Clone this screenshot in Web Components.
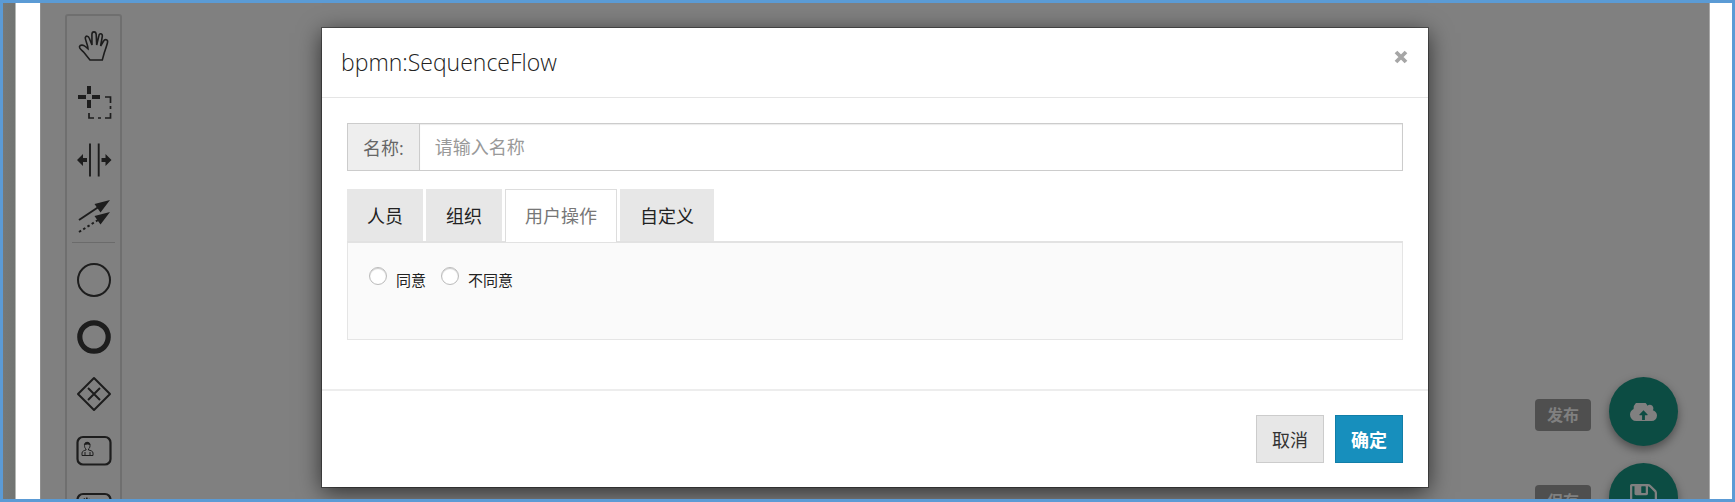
<!DOCTYPE html>
<html lang="zh-CN">
<head>
<meta charset="utf-8">
<meta name="viewport" content="width=device-width, initial-scale=1">
<title>bpmn:SequenceFlow</title>
<style>
  html, body { margin: 0; height: 100%; }
  body { font-family: "Open Sans", "Noto Sans CJK SC", sans-serif; color: #222; overflow: hidden; }
</style>
</head>
<body>
<flow-designer>
  <tool-palette slot="palette">
    <palette-tool name="hand" label="Hand tool"></palette-tool>
    <palette-tool name="lasso" label="Lasso tool"></palette-tool>
    <palette-tool name="space" label="Space tool"></palette-tool>
    <palette-tool name="connect" label="Connect tool"></palette-tool>
    <palette-divider></palette-divider>
    <palette-tool name="start" label="Start event"></palette-tool>
    <palette-tool name="end" label="End event"></palette-tool>
    <palette-tool name="gateway" label="Gateway"></palette-tool>
    <palette-tool name="user" label="User task"></palette-tool>
    <palette-tool name="service" label="Service task"></palette-tool>
  </tool-palette>
  <modal-dialog slot="dialog" heading="bpmn:SequenceFlow">
    <name-field label="名称:" placeholder="请输入名称"></name-field>
    <tab-panel tabs="人员,组织,用户操作,自定义" active="2">
      <radio-option label="同意"></radio-option>
      <radio-option label="不同意"></radio-option>
    </tab-panel>
    <action-button slot="footer">取消</action-button>
    <action-button slot="footer" primary>确定</action-button>
  </modal-dialog>
  <floating-action slot="actions" label="发布" icon="cloud"></floating-action>
  <floating-action slot="actions" label="保存" icon="save"></floating-action>
</flow-designer>

<script>
const define = (name, render) => customElements.define(name, class extends HTMLElement {
  connectedCallback() {
    if (this.shadowRoot) return;
    this.attachShadow({ mode: 'open' }).innerHTML = '<style>*{box-sizing:border-box}</style>' + render(this);
  }
});

define('flow-designer', () => `
  <style>
    :host { display: flex; box-sizing: border-box; height: 100vh; border: 3px solid #5b9bd5; background: #fff; overflow: hidden; }
    .edge { flex: 0 0 13px; background: linear-gradient(90deg, #767977, #717472); border-right: 1px solid #b5b8b5; }
    .canvas { flex: 1; min-width: 0; display: grid; margin: 0 22px 0 24px; background: #808080;
      border-left: 1px solid #8f8f8f; border-right: 1px solid #a8a8a8; overflow: hidden; }
    .canvas > * { grid-area: 1 / 1; align-self: start; }
    .palette { justify-self: start; padding: 11px 0 0 24px; }
    .actions { justify-self: end; display: grid; gap: 17px; padding: 374px 31px 0 0; }
    .dialog { justify-self: center; width: 100%; max-width: 1106px; padding-top: 25px; z-index: 1; }
  </style>
  <div class="edge"></div>
  <main class="canvas">
    <div class="palette"><slot name="palette"></slot></div>
    <div class="actions"><slot name="actions"></slot></div>
    <div class="dialog"><slot name="dialog"></slot></div>
  </main>`);

define('tool-palette', () => `
  <style>
    :host { display: flex; flex-direction: column; box-sizing: border-box; width: 57px; border: 2px solid #6f6f6f; border-radius: 3px; }
  </style><slot></slot>`);

define('palette-divider', () => `
  <style>:host { display: block; height: 1px; margin: 1px 5px 5px; background: #6b6b6b; }</style>`);

const task = '<rect x="3.500" y="6" width="33" height="27.500" rx="5.500" stroke-width="2.200"/>';
const tools = {
  hand: '<path stroke-width="1.600" d="M16 34 L10 26.500 C8 24.500 5 22.500 5.500 20.500 C6.300 18.300 9.500 19 11.300 20.500 L14 22.800 C14 18.500 10.800 13.500 11.300 11.500 C12 9.500 14.400 9.800 15.200 12 L18 19 L17.900 8.500 C18 5 21.900 5 22.200 8.500 L22.700 19 L24.800 10 C25.400 6.500 28.700 7.300 28.300 10.500 L26.600 20 L29.300 15.500 C31 12.500 34.200 13.500 33.500 16.500 C33 19 31.500 23 30.500 26 L28.300 34 Z"/>',
  lasso: '<path stroke-width="4" d="M15 3v8M15 17v8M4 14h8M18 14h8"/><path stroke-width="1.700" d="M31 14h5.500v6M36.500 23v3M36.500 30v5H31M27 35h-3M20 35h-5v-5"/>',
  space: '<path stroke-width="1.900" d="M16 3.500v33M24.700 3.500v33"/><path fill="#1d1d1d" stroke="none" d="M3 20l6-6v4h4v4H9v4zM37.500 20l-6-6v4H27.500v4h4v4z"/>',
  connect: '<path stroke-width="2" d="M5 23l21-14"/><path stroke-width="2" stroke-dasharray="2.500 2.500" d="M5 35l19-12"/><path fill="#1d1d1d" stroke="none" d="M36 3L20.500 7l6 8.500zM36 15L20.500 19l6 8.500z"/>',
  start: '<circle cx="20" cy="20" r="16" stroke-width="2"/>',
  end: '<circle cx="20" cy="20" r="14.200" stroke-width="5.200"/>',
  gateway: '<path stroke-width="2" stroke-linejoin="round" d="M20 4l16 16-16 16L4 20zM14 14l12 12M26 14L14 26"/>',
  user: task + '<path stroke-width="1" d="M10.500 14.500c-1-4 6-4.500 5.500 0c0 2-.8 3-1.500 3.500v1c2 .5 4.500 1 4.500 3v2.500H8v-2.500c0-2 2.500-2.500 4-3v-1c-1-.7-1.500-1.800-1.500-3.500M11 24v-3M16 24v-3"/><path fill="#1d1d1d" stroke="none" d="M10.500 14c0-4 6-4 5.700 0c-2-.8-3.500-.8-5.700 0"/>',
  service: task + '<circle cx="12.500" cy="14" r="3.500" stroke-width="1.800" stroke-dasharray="1.600 1"/>'
};
define('palette-tool', el => `
  <style>
    :host { display: block; margin-bottom: 8px; }
    :host(:first-child) { margin-top: 5px; }
    :host([name="connect"]) { margin-bottom: 0; }
    :host([name="start"]) { margin-top: 7px; }
    button { display: grid; place-items: center; width: 100%; height: 49px; padding: 0; border: 0; background: none; }
    svg { display: block; fill: none; stroke: #1d1d1d; }
  </style>
  <button type="button" aria-label="${el.getAttribute('label')}"><svg width="40" height="40" viewBox="0 0 40 40">${tools[el.getAttribute('name')]}</svg></button>`);

define('modal-dialog', el => `
  <style>
    :host { display: block; background: #fff; outline: 1px solid rgba(0,0,0,.35); box-shadow: 0 5px 22px rgba(0,0,0,.65); }
    header { display: flex; justify-content: space-between; align-items: flex-start; height: 70px; padding: 18px 19px 0; border-bottom: 1px solid #e5e5e5; }
    h2 { margin: 0; font-size: 23px; line-height: 32px; font-weight: 300; color: #222; }
    .close { display: grid; margin-top: 4px; padding: 0; border: 0; background: none; }
    .body { padding: 25px 25px 49px; }
    footer { display: flex; justify-content: flex-end; gap: 11px; padding: 24px 25px; border-top: 2px solid #ededed; }
  </style>
  <section role="dialog" aria-labelledby="title">
    <header>
      <h2 id="title">${el.getAttribute('heading')}</h2>
      <button class="close" type="button" aria-label="关闭"><svg width="16" height="14" viewBox="0 0 16 14"><path d="M3 2l10 10M13 2L3 12" stroke="#a6a6a6" stroke-width="3.800"/></svg></button>
    </header>
    <div class="body"><slot></slot></div>
    <footer><slot name="footer"></slot></footer>
  </section>`);

define('name-field', el => `
  <style>
    :host { display: flex; height: 48px; margin-bottom: 18px; font-size: 18px; }
    label { display: flex; align-items: center; padding: 0 15px 1px; background: #eee; border: 1px solid #ccc; border-right: 0; color: #666; }
    input { flex: 1; min-width: 0; padding: 0 15px; border: 1px solid #ccc; border-radius: 0; background: #fff;
      box-shadow: inset 0 1px 1px rgba(0,0,0,.08); font: inherit; color: #444; outline: 0; }
    input::placeholder { color: #999; opacity: 1; }
  </style>
  <label for="name">${el.getAttribute('label')}</label><input id="name" type="text" placeholder="${el.getAttribute('placeholder')}">`);

define('tab-panel', el => `
  <style>
    :host { display: block; }
    .tabs { display: flex; gap: 3px; border-bottom: 2px solid #e2e2e2; }
    button { height: 52px; padding: 0 20px 1px; border: 0; background: #e7e7e7; font: inherit; font-size: 18px; color: #222; }
    button[aria-selected="true"] { margin-bottom: -1px; height: 53px; padding: 0 19px 3px; border: 1px solid #ddd; border-bottom: 0; background: #fff; color: #777; }
    .panel { display: flex; gap: 15px; height: 97px; padding: 24px 21px; border: 1px solid #e5e5e5; border-top: 0; background: #fafafa; }
  </style>
  <div class="tabs" role="tablist">${el.getAttribute('tabs').split(',').map((t, i) =>
    `<button type="button" role="tab" aria-selected="${i == el.getAttribute('active')}">${t}</button>`).join('')}</div>
  <div class="panel" role="tabpanel"><slot></slot></div>`);

define('radio-option', el => `
  <style>
    :host { display: block; }
    label { display: flex; gap: 9px; font-size: 15px; line-height: 22px; }
    span { padding-top: 2px; }
    input { appearance: none; width: 18px; height: 18px; margin: 0; border: 1px solid #bbb; border-radius: 50%; background: #fff; box-shadow: inset 0 1px 1px #ccc; }
  </style>
  <label><input type="radio" name="operation"><span>${el.getAttribute('label')}</span></label>`);

define('action-button', el => `
  <style>
    :host { display: block; }
    button { height: 48px; padding: 0 15px; border: 1px solid #ccc; background: #e7e7e7; font: inherit; font-size: 18px; color: #333; }
    .primary { border-color: #117ea8; background: #178fbd; color: #fff; font-weight: 600; }
  </style>
  <button type="button" class="${el.hasAttribute('primary') ? 'primary' : ''}"><slot></slot></button>`);

const actionIcons = {
  cloud: '<svg width="27" height="18" viewBox="0 256 1920 1280"><path d="M1250 1070L960 780 670 1070q-20 50 20 50h170v340h200v-340h170q40 0 20-50zm670 82q0 159-112.500 271.500t-271.500 112.500h-1088q-185 0-316.500-131.500t-131.500-316.500q0-130 70-240t188-165q-2-30-2-43 0-212 150-362t362-150q156 0 285.500 87t188.500 231q71-62 166-62 106 0 181 75t75 181q0 76-41 138 130 31 213.500 135.500t83.500 238.500z" fill-rule="evenodd"/></svg>',
  save: '<svg width="27" height="27" viewBox="128 128 1536 1536"><path d="M512 1536h768v-384h-768v384zm896 0h128v-896q0-14-10-38.500t-20-34.500l-281-281q-10-10-34-20t-39-10v416q0 40-28 68t-68 28h-576q-40 0-68-28t-28-68v-416h-128v1280h128v-416q0-40 28-68t68-28h832q40 0 68 28t28 68v416zm-384-928v-320q0-13-9.500-22.500t-22.500-9.500h-192q-13 0-22.500 9.500t-9.500 22.500v320q0 13 9.500 22.500t22.500 9.500h192q13 0 22.500-9.500t9.500-22.500zm640 32v928q0 40-28 68t-68 28h-1344q-40 0-68-28t-28-68v-1344q0-40 28-68t68-28h928q40 0 88 20t76 48l280 280q28 28 48 76t20 88z"/></svg>'
};
define('floating-action', el => `
  <style>
    :host { display: flex; align-items: center; gap: 18px; }
    label { margin-top: 7px; padding: 0 12px; border-radius: 4px; background: #4f4f4f; color: #808080; font-size: 16px; line-height: 32px; font-weight: 700; }
    button { display: grid; place-items: center; width: 69px; height: 69px; padding: 0; border: 0; border-radius: 50%; background: #0c4c43; box-shadow: 0 4px 10px rgba(0,0,0,.4); }
    svg { display: block; fill: #808080; }
  </style>
  <label for="act">${el.getAttribute('label')}</label><button id="act" type="button">${actionIcons[el.getAttribute('icon')]}</button>`);
</script>
</body>
</html>
